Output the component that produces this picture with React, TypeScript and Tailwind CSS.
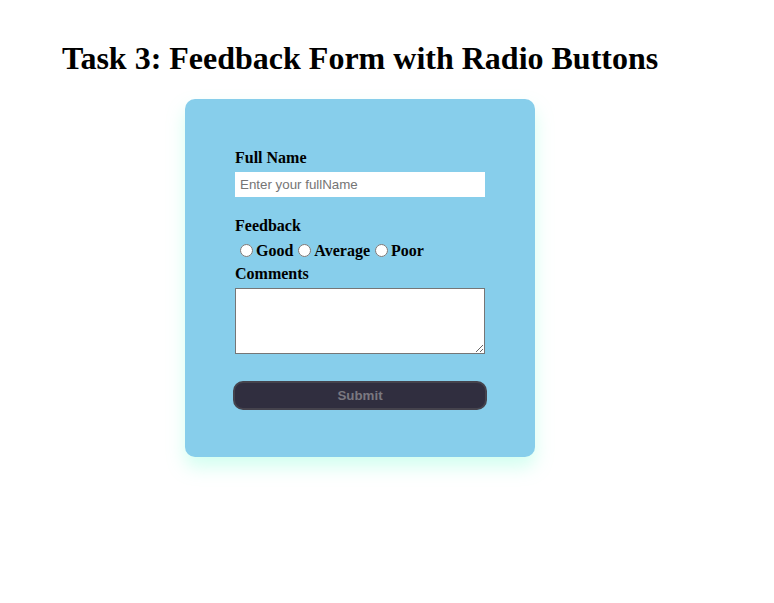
import React from "react";

export default function App() {
  return (
    <div className="min-h-[603px] bg-white text-black">
      <h1 className="pt-[40px] pl-[62px] text-[32px] leading-[36px] font-bold font-['Liberation_Serif',serif]">
        Task 3: Feedback Form with Radio Buttons
      </h1>
      <div className="ml-[185px] mt-[23px] w-[350px] rounded-[10px] bg-[#87CEEB] pt-[50px] pb-[47px] pl-[50px] shadow-[0_10px_18px_rgba(127,255,212,0.35)] font-['Liberation_Serif',serif]">
        <label className="block text-[16px] leading-[18px] font-bold">Full Name</label>
        <input
          type="text"
          placeholder="Enter your fullName"
          className="mt-[5px] block h-[25px] w-[250px] bg-white px-[5px] text-[13.33px] font-['Liberation_Sans',sans-serif] outline-none placeholder:text-[#757575]"
        />
        <label className="mt-[20px] block text-[16px] leading-[18px] font-bold">Feedback</label>
        <div className="mt-[7px] flex items-end text-[16px] leading-[18px] font-bold">
          <input type="radio" name="fb" className="ml-[5px] mr-[3px] mb-[3px] h-[13px] w-[13px]" />
          <span>Good</span>
          <input type="radio" name="fb" className="ml-[5px] mr-[3px] mb-[3px] h-[13px] w-[13px]" />
          <span>Average</span>
          <input type="radio" name="fb" className="ml-[5px] mr-[3px] mb-[3px] h-[13px] w-[13px]" />
          <span>Poor</span>
        </div>
        <label className="mt-[5px] block text-[16px] leading-[18px] font-bold">Comments</label>
        <textarea className="mt-[5px] block h-[66px] w-[250px] border border-[#767676] bg-white" />
        <button
          type="button"
          className="mt-[27px] -ml-[2px] flex h-[29px] w-[254px] items-center justify-center rounded-[10px] border-2 border-[#45434d] bg-[#302e3f] text-[13.33px] font-bold text-[#7a7880] font-['Liberation_Sans',sans-serif]"
        >
          Submit
        </button>
      </div>
    </div>
  );
}
